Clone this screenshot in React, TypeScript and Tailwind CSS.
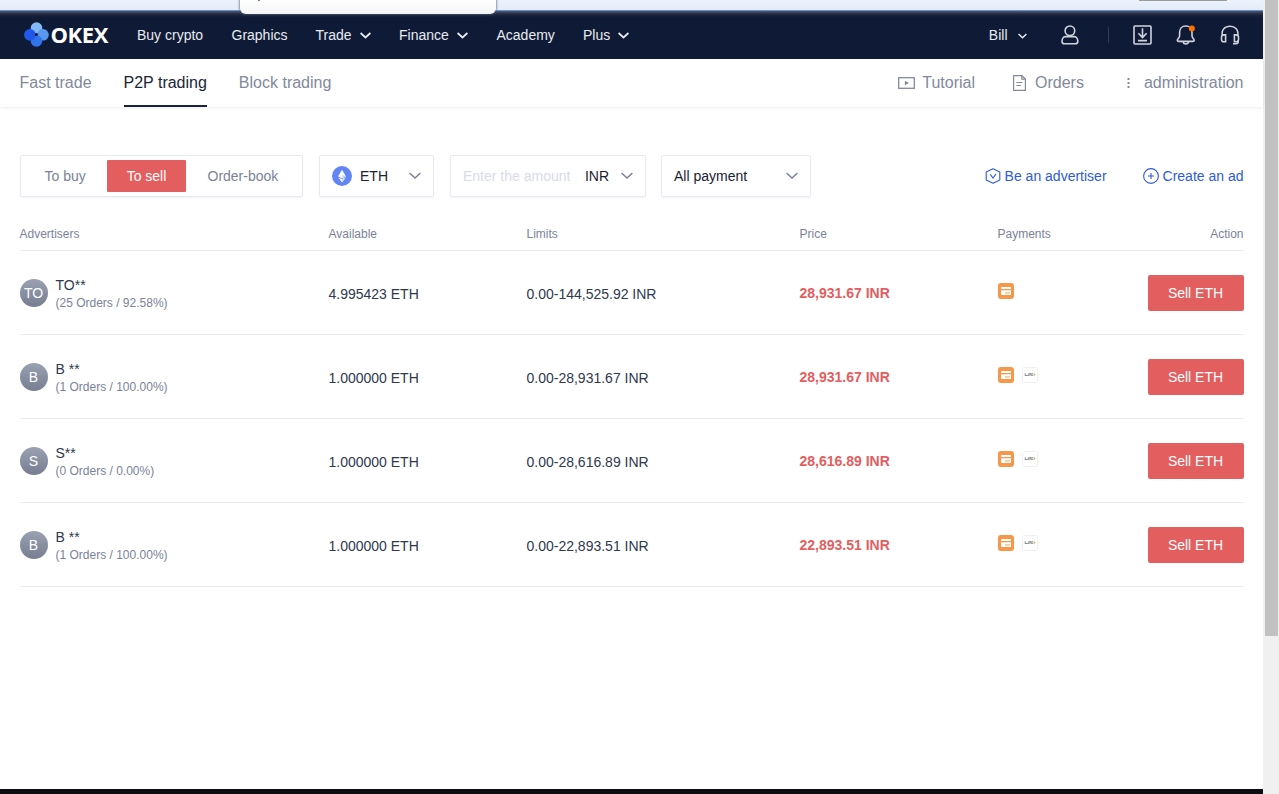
import type { ReactNode } from "react";

const rows = [
  { id: 1, initials: "TO", name: "TO**", stats: "(25 Orders / 92.58%)", available: "4.995423 ETH", limits: "0.00-144,525.92 INR", price: "28,931.67 INR", upi: false },
  { id: 2, initials: "B", name: "B **", stats: "(1 Orders / 100.00%)", available: "1.000000 ETH", limits: "0.00-28,931.67 INR", price: "28,931.67 INR", upi: true },
  { id: 3, initials: "S", name: "S**", stats: "(0 Orders / 0.00%)", available: "1.000000 ETH", limits: "0.00-28,616.89 INR", price: "28,616.89 INR", upi: true },
  { id: 4, initials: "B", name: "B **", stats: "(1 Orders / 100.00%)", available: "1.000000 ETH", limits: "0.00-22,893.51 INR", price: "22,893.51 INR", upi: true },
];

const columns = "grid grid-cols-[309px_198px_273px_198px_1fr]";

function Chevron({ className, width = 11, stroke = 1.6, depth = 5.5 }: { className: string; width?: number; stroke?: number; depth?: number }) {
  return (
    <svg className={className} width={width} height="7" viewBox={`0 0 ${width} 7`} fill="none" stroke="currentColor" strokeWidth={stroke}>
      <path d={`M.6 1 L${width / 2} ${depth} L${width - 0.6} 1`} />
    </svg>
  );
}

function Logo() {
  return (
    <div className="flex w-[113px] items-center pl-6">
      <svg className="shrink-0" width="26" height="26" viewBox="0 0 26 26">
        <circle cx="12.5" cy="6" r="5.8" fill="#84b8f4" />
        <circle cx="19" cy="12.8" r="5.8" fill="#5a98f0" />
        <circle cx="12.5" cy="19" r="5.8" fill="#2f74ea" />
        <circle cx="5.9" cy="12.8" r="5.9" fill="#2057ec" />
        <circle cx="12.4" cy="12.6" r="1.5" fill="#0f1a36" />
      </svg>
      <span className="whitespace-nowrap pb-[3px] pl-[0.5px] font-['Open_Sans',sans-serif] text-[22px] leading-[32px] font-bold tracking-[-0.4px] text-white">OKEX</span>
    </div>
  );
}

function Header() {
  return (
    <header className="flex h-12 shrink-0 items-center bg-[linear-gradient(180deg,#525968_0px,#333a4d_2px,#19223d_4px,#0f1a36_7px)] text-[14px] leading-5 text-[#e8ebf0]">
      <Logo />
      <nav className="flex items-center whitespace-nowrap pl-6">
        <span className="w-[94.5px]">Buy crypto</span>
        <span className="w-[84px]">Graphics</span>
        <span className="flex w-[83.5px] items-center">Trade<Chevron className="ml-[8px] mt-px" stroke={1.7} /></span>
        <span className="flex w-[97.5px] items-center">Finance<Chevron className="ml-[8px] mt-px" stroke={1.7} /></span>
        <span className="w-[86.5px]">Academy</span>
        <span className="flex items-center">Plus<Chevron className="ml-[8px] mt-px" stroke={1.7} /></span>
      </nav>
      <div className="ml-auto flex items-center pr-[23px]">
        <span>Bill</span>
        <Chevron className="ml-[10.5px] mt-[2px]" width={9} stroke={1.5} depth={4.8} />
        <svg className="ml-[34px]" width="18" height="20" viewBox="0 0 18 20" fill="none" stroke="#cfd3dc" strokeWidth="1.6">
          <circle cx="8.9" cy="5.8" r="4.8" />
          <path d="M4.4 11.6h9c2.2 0 3.4 2.6 3.4 4.6 0 1.7-.9 2.6-2.4 2.6H3.4c-1.5 0-2.4-.9-2.4-2.6 0-2 1.2-4.6 3.4-4.6z" />
        </svg>
        <span className="ml-[29px] h-4 w-px bg-[#343c54]" />
        <svg className="ml-[24px]" width="19" height="20" viewBox="0 0 19 20" fill="none" stroke="#cfd3dc" strokeWidth="1.6">
          <rect x="1" y="1" width="17" height="18" rx="1" />
          <path d="M9.5 3.2v9M5.4 8.3l4.1 4.2 4.1-4.2M5 15.6h9" />
        </svg>
        <svg className="ml-[24px]" width="20" height="22" viewBox="0 0 20 22" fill="none" stroke="#cfd3dc" strokeWidth="1.6">
          <path d="M3.6 12V8.2C3.6 4.5 6 2 9.8 2s6.2 2.5 6.2 6.2V12c0 1.6 2.2 3 2.2 4.2 0 .8-.6 1.2-1.4 1.2H2.7c-.8 0-1.4-.4-1.4-1.2C1.3 15 3.6 13.6 3.6 12z" strokeLinejoin="round" />
          <path d="M7 18c.5 1.4 1.5 2 2.8 2s2.4-.6 2.9-2" />
          <circle cx="15.8" cy="4.4" r="3" fill="#ff7200" stroke="none" />
        </svg>
        <svg className="ml-[24px]" width="20" height="20" viewBox="0 0 20 20" fill="none" stroke="#cfd3dc" strokeWidth="1.6">
          <path d="M2.4 11C1 4.6 5 1.2 10 1.2s9 3.4 7.6 9.8M18.2 15v1.6c0 1.5-.7 2.2-2.2 2.2h-3" />
          <path d="M5.6 9.9v6.8H3.8a2.3 2.3 0 0 1-2.3-2.3v-2.2a2.3 2.3 0 0 1 2.3-2.3zM14.4 9.9v6.8h1.8a2.3 2.3 0 0 0 2.3-2.3v-2.2a2.3 2.3 0 0 0-2.3-2.3z" />
        </svg>
      </div>
    </header>
  );
}

function SubNav() {
  return (
    <div className="flex h-12 shrink-0 items-center justify-between bg-white pl-[19.5px] pr-[19.5px] text-[16px] leading-6 text-[#82899b] shadow-[0_1px_3px_rgba(0,0,0,0.08)]">
      <nav className="flex h-full gap-8">
        <span className="flex h-full items-center border-b-2 border-transparent pt-px">Fast trade</span>
        <span className="flex h-full items-center border-b-2 border-[#1b2437] pt-px text-[#1b2437]">P2P trading</span>
        <span className="flex h-full items-center border-b-2 border-transparent pt-px">Block trading</span>
      </nav>
      <div className="flex items-center">
        <svg width="17" height="12" viewBox="0 0 17 12" fill="none" stroke="currentColor" strokeWidth="1.3">
          <rect x="0.7" y="0.7" width="15.6" height="10.6" />
          <path d="M6.9 3.7v4.6l4-2.3z" fill="currentColor" stroke="none" />
        </svg>
        <span className="ml-[7px]">Tutorial</span>
        <svg className="ml-[38px]" width="13" height="16" viewBox="0 0 13 16" fill="none" stroke="currentColor" strokeWidth="1.2">
          <path d="M.6.6h8.3l3.5 3.5v11.3H.6zM8.8.8v3.4h3.5M3.4 7.5h6M3.4 10.5h4.5" />
        </svg>
        <span className="ml-[9px]">Orders</span>
        <svg className="ml-[43px]" width="3" height="12" viewBox="0 0 3 12" fill="currentColor">
          <path d="M.5 1h2v2h-2zM.5 5h2v2h-2zM.5 9h2v2h-2z" />
        </svg>
        <span className="ml-[14px]">administration</span>
      </div>
    </div>
  );
}

function Box({ className, children }: { className: string; children: ReactNode }) {
  return (
    <div className={`flex h-[42px] items-center rounded-[2px] border border-[#e8eaf1] bg-white shadow-[0_1px_2px_rgba(30,40,80,0.06)] ${className}`}>
      {children}
    </div>
  );
}

function Filters() {
  return (
    <div className="flex items-center whitespace-nowrap text-[14px] leading-5">
      <Box className="w-[283px] text-[#7b8298]">
        <span className="w-[86px] pl-[23.5px]">To buy</span>
        <span className="flex h-8 w-[79px] items-center justify-center rounded-[1px] bg-[#e35e5e] text-white">To sell</span>
        <span className="pl-[21.5px]">Order-book</span>
      </Box>
      <Box className="ml-4 w-[115px] justify-between pl-3 pr-3 text-[#1b2130]">
        <span className="flex items-center">
          <svg className="mr-[8px]" width="20" height="20" viewBox="0 0 20 20">
            <circle cx="10" cy="10" r="10" fill="#6284f5" />
            <path d="M10 3.7 6.2 10.2 10 12.4l3.8-2.2z" fill="#fff" />
            <path d="M6.2 11.2 10 16.5l3.8-5.3-3.8 2.1z" fill="#fff" />
            <path d="M10 8.6v3.8l3.8-2.2zM10 13.3v3.2l3.8-5.3z" fill="#d3dcfc" />
          </svg>
          ETH
        </span>
        <Chevron className="-mt-px text-[#7b8298]" width={12} depth={6} stroke={1.5} />
      </Box>
      <Box className="ml-4 w-[196px] pl-3 text-[#1b2130]">
        <span className="text-[#d7dbe8]">Enter the amount</span>
        <span className="ml-[14.5px]">INR</span>
        <Chevron className="-mt-px ml-[12px] text-[#7b8298]" width={12} depth={6} stroke={1.5} />
      </Box>
      <Box className="ml-[15px] w-[150px] justify-between pl-3 pr-3 text-[#1b2130]">
        All payment
        <Chevron className="-mt-px text-[#7b8298]" width={12} depth={6} stroke={1.5} />
      </Box>
      <div className="-mr-px ml-auto flex items-center pr-[1.5px] text-[#2e5bd9]">
        <svg className="mr-1" width="16" height="16" viewBox="0 0 16 16" fill="none" stroke="currentColor" strokeWidth="1.1">
          <path d="M8 .7 14.8 4v8L8 15.3 1.2 12V4z" strokeLinejoin="round" />
          <path d="m5.2 6.2 2.8 3.9 2.9-3.9" />
        </svg>
        <span>Be an advertiser</span>
        <svg className="ml-9 mr-1" width="16" height="16" viewBox="0 0 16 16" fill="none" stroke="currentColor" strokeWidth="1.1">
          <circle cx="8" cy="8" r="7.4" />
          <path d="M8 5v6M5 8h6" />
        </svg>
        <span>Create an ad</span>
      </div>
    </div>
  );
}

function CardIcon() {
  return (
    <svg width="16" height="16" viewBox="0 0 16 16">
      <rect width="16" height="16" rx="3" fill="#f8964a" />
      <path d="M3.6 4h8.8q.6 0 .6.6V6H3V4.6q0-.6.6-.6zM3 7.2h10v4.2q0 .6-.6.6H3.6q-.6 0-.6-.6z" fill="#fff" />
      <path d="M7 9.9h5" stroke="#f8b47f" strokeWidth="1.2" />
    </svg>
  );
}

function UpiIcon() {
  return (
    <svg width="16" height="16" viewBox="0 0 16 16" fill="none">
      <rect x=".5" y=".5" width="15" height="15" rx="1" fill="#fff" stroke="#eff0f6" />
      <path d="M3.4 6.4 3 8.5h2.8M6.2 8.9l.4-2.2h2.4l-.2 1.4H6.6M9.2 6.8h2.2M9 8.3h2.4" stroke="#7f8284" strokeWidth=".9" />
      <path d="m12 6 1.4 1.5L12 9z" fill="#d9a24c" />
    </svg>
  );
}

function Offers() {
  return (
    <section className="indent-[-0.5px] text-[14px]">
      <div className={`${columns} h-[54px] border-b border-[#e8eaf1] pt-[29px] text-[12px] leading-4 text-[#7b8298]`}>
        <span>Advertisers</span>
        <span>Available</span>
        <span>Limits</span>
        <span>Price</span>
        <span className="flex justify-between"><span>Payments</span><span className="pr-[0.5px]">Action</span></span>
      </div>
      {rows.map((row) => (
        <div key={row.id} className={`${columns} h-[84px] items-center border-b border-[#e8eaf1] text-[#30384d]`}>
          <div className="flex items-center gap-2">
            <span className="flex size-7 items-center justify-center rounded-full bg-linear-to-b from-[#9aa1b1] to-[#777e92] pr-[0.5px] pt-px text-[14px] text-white">{row.initials}</span>
            <span className="flex flex-col pt-[2px]">
              <span className="leading-[18px]">{row.name}</span>
              <span className="text-[12px] leading-[18px] text-[#7b8298]">{row.stats}</span>
            </span>
          </div>
          <span className="pt-[3px]">{row.available}</span>
          <span className="pt-[3px]">{row.limits}</span>
          <span className="pt-px font-bold text-[#e35e5e]">{row.price}</span>
          <div className="flex items-center justify-between">
            <span className="flex gap-2 pb-1">
              <CardIcon />
              {row.upi && <UpiIcon />}
            </span>
            <button className="h-9 w-24 rounded-[2px] bg-[#e35e5e] pr-px text-[14px] leading-5 text-white">Sell ETH</button>
          </div>
        </div>
      ))}
    </section>
  );
}

export default function App() {
  return (
    <div className="flex h-[794px] w-[1279px] overflow-hidden bg-white font-['Liberation_Sans',Arial,sans-serif]">
      <div className="relative flex w-[1263px] flex-col">
        <div className="flex h-[11px] shrink-0 items-start justify-end border-b border-[#6590dc] bg-linear-to-b from-[#edf3fd] to-[#e2ebf8] pr-9">
          <div className="h-px w-[88px] bg-[#999999]" />
        </div>
        <Header />
        <SubNav />
        <main className="flex grow flex-col px-5 pt-12 pr-[19px]">
          <Filters />
          <Offers />
        </main>
        <div className="h-[5px] shrink-0 bg-[#0d0c12]" />
        <div className="absolute left-[240px] top-0 h-[14px] w-[256px] rounded-b-[6px] bg-linear-to-b from-white to-[#f4f5f7] shadow-[0_0_2px_1px_rgba(80,90,110,0.6)]">
          <div className="ml-[18px] h-px w-[2px] bg-[#7d7d85]" />
        </div>
      </div>
      <div className="h-full w-4 bg-[#f0f0f0] pl-[2px]">
        <div className="h-[636px] w-[13px] bg-[#c1c1c1]" />
      </div>
    </div>
  );
}
